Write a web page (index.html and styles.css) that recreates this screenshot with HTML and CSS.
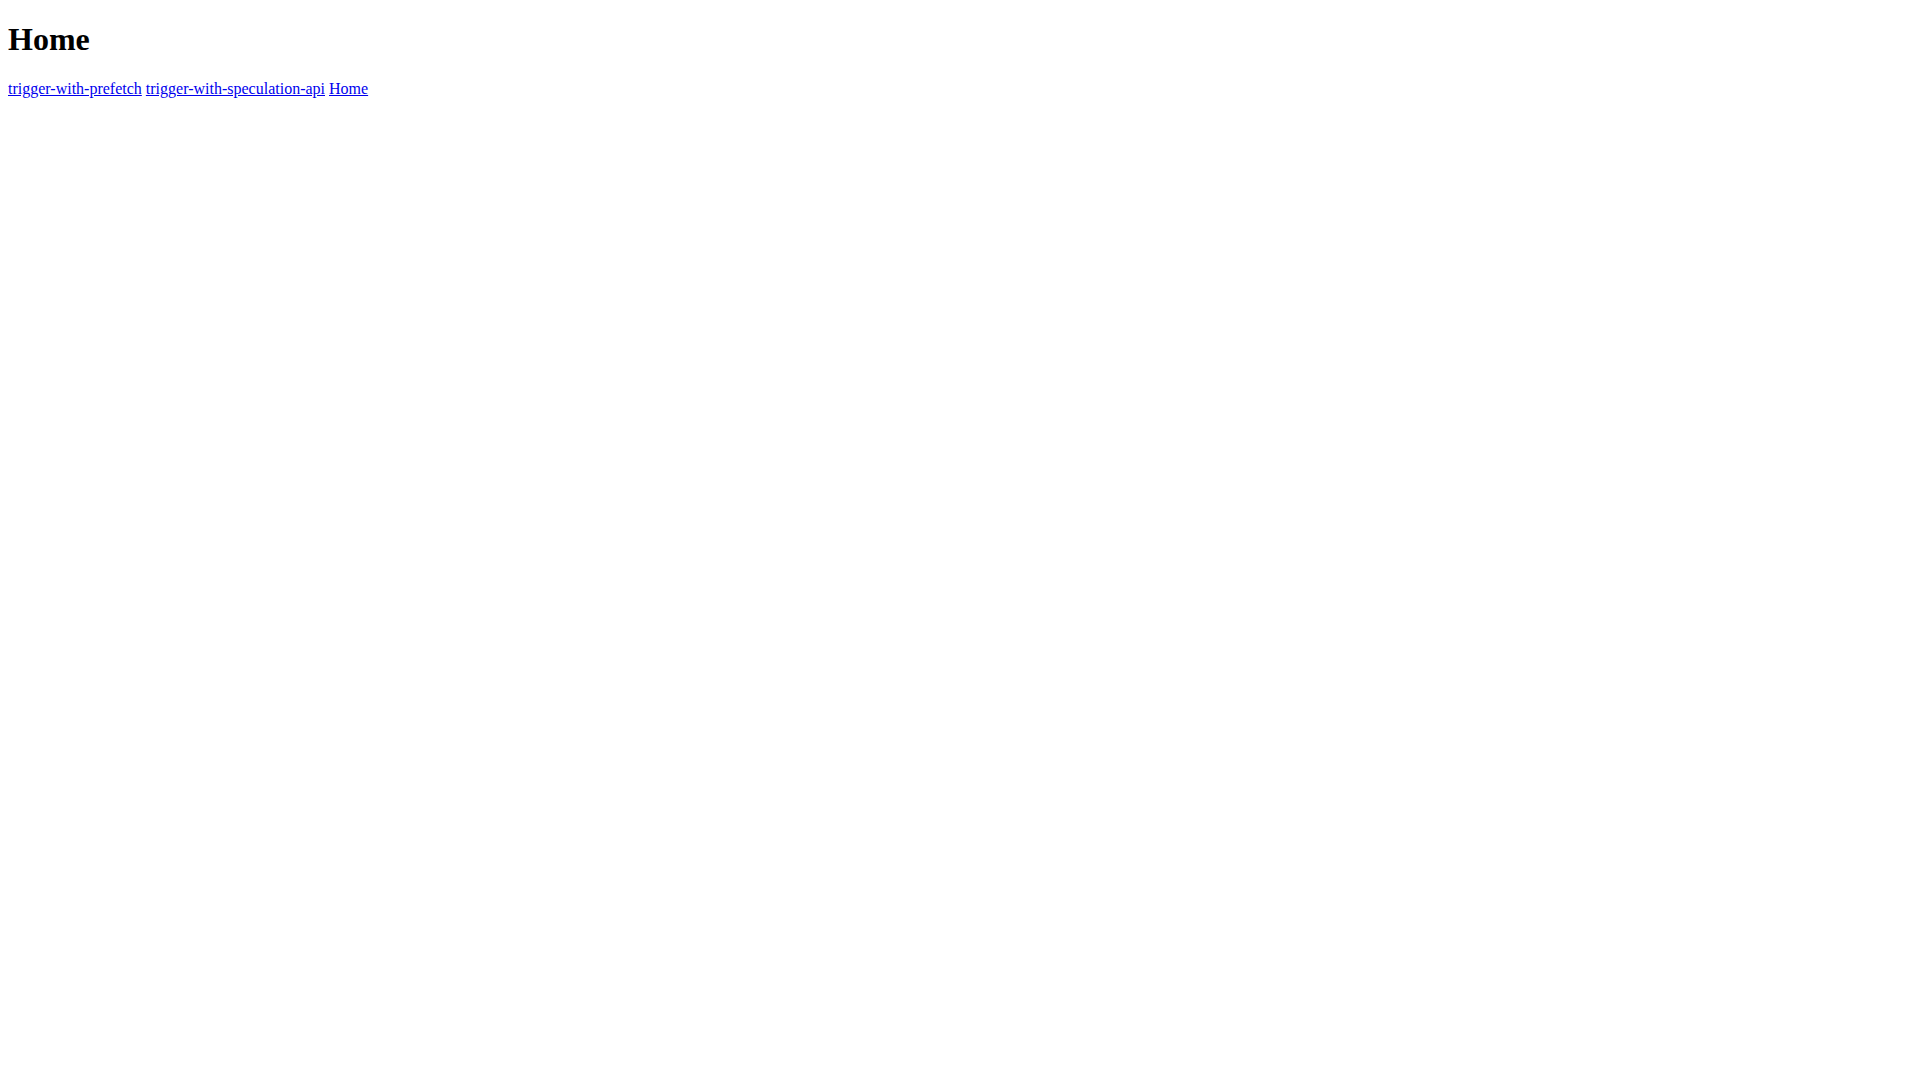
FILE: index.html
```html
<!DOCTYPE html>
<html lang="en">
<head>
    <meta charset="UTF-8">
    <meta name="viewport" content="width=device-width, initial-scale=1.0">
    <title>Home</title>
    <link rel="stylesheet" href="styles.css">
</head>
<body>

<h1>Home</h1>

<a href="#trigger-with-prefetch">trigger-with-prefetch</a>
<a href="#trigger-with-speculation-api">trigger-with-speculation-api</a>
<a href="#">Home</a>

</body>
</html>
```

FILE: styles.css
```css
body {
    margin: 0 8px;
    font-family: "Liberation Serif", "Times New Roman", serif;
}

h1 {
    font-size: 32px;
    margin: 21px 0 22px;
}

a {
    color: #0000ee;
}
```
